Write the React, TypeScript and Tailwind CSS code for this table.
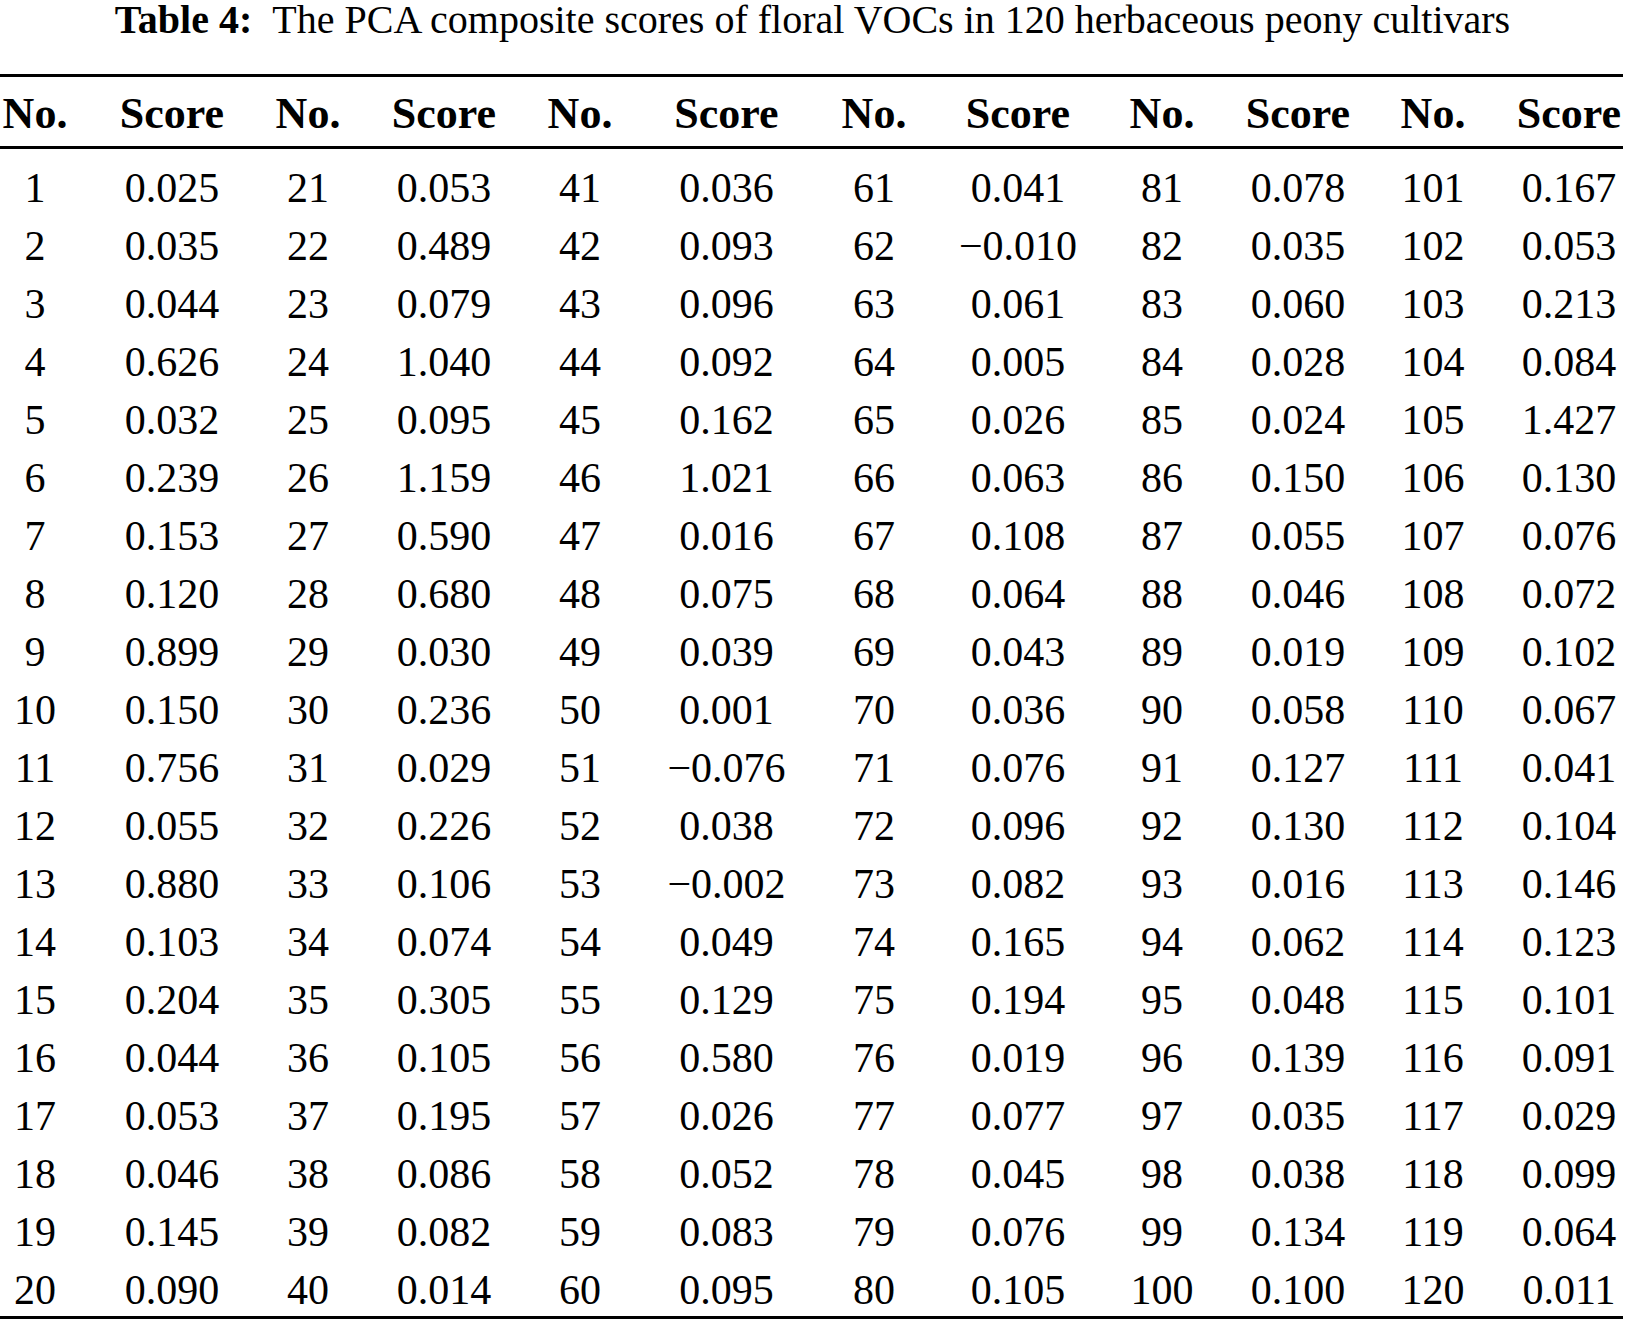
const scores: string[] = [
  '0.025', '0.035', '0.044', '0.626', '0.032', '0.239', '0.153', '0.120', '0.899', '0.150',
  '0.756', '0.055', '0.880', '0.103', '0.204', '0.044', '0.053', '0.046', '0.145', '0.090',
  '0.053', '0.489', '0.079', '1.040', '0.095', '1.159', '0.590', '0.680', '0.030', '0.236',
  '0.029', '0.226', '0.106', '0.074', '0.305', '0.105', '0.195', '0.086', '0.082', '0.014',
  '0.036', '0.093', '0.096', '0.092', '0.162', '1.021', '0.016', '0.075', '0.039', '0.001',
  '−0.076', '0.038', '−0.002', '0.049', '0.129', '0.580', '0.026', '0.052', '0.083', '0.095',
  '0.041', '−0.010', '0.061', '0.005', '0.026', '0.063', '0.108', '0.064', '0.043', '0.036',
  '0.076', '0.096', '0.082', '0.165', '0.194', '0.019', '0.077', '0.045', '0.076', '0.105',
  '0.078', '0.035', '0.060', '0.028', '0.024', '0.150', '0.055', '0.046', '0.019', '0.058',
  '0.127', '0.130', '0.016', '0.062', '0.048', '0.139', '0.035', '0.038', '0.134', '0.100',
  '0.167', '0.053', '0.213', '0.084', '1.427', '0.130', '0.076', '0.072', '0.102', '0.067',
  '0.041', '0.104', '0.146', '0.123', '0.101', '0.091', '0.029', '0.099', '0.064', '0.011',
];

const gridCols =
  'grid grid-cols-[70px_204px_68px_204px_68px_225px_70px_218px_70px_202px_68px_156px]';

const App = () => {
  const rows = Array.from({ length: 20 }, (_, r) => r);
  const groups = Array.from({ length: 6 }, (_, g) => g);

  return (
    <div className="min-h-screen bg-white text-black font-['Liberation_Serif','Times_New_Roman',serif]">
      {/* Caption */}
      <div className="text-center text-[40px] leading-[40px]">
        <span className="font-bold">Table 4:</span>
        <span className="ml-[20px]">The PCA composite scores of floral VOCs in 120 herbaceous peony cultivars</span>
      </div>

      {/* Table */}
      <div className="mt-[34px] w-[1623px] border-t-[3px] border-b-[3px] border-black">
        <div className={`${gridCols} border-b-[3px] border-black pt-[13px] pb-[8px] text-[44px] leading-[48px] font-bold`}>
          {groups.map((g) => (
            <div key={g} className="contents">
              <div className="text-center">No.</div>
              <div className={`text-center ${g === 5 ? 'pl-[48px]' : ''}`}>Score</div>
            </div>
          ))}
        </div>

        <div className="pt-[7px] text-[42px] leading-[52px]">
          {rows.map((r) => (
            <div key={r} className={`${gridCols} pt-[6px]`}>
              {groups.map((g) => {
                const n = g * 20 + r + 1;
                return (
                  <div key={g} className="contents">
                    <div className="text-center">{n}</div>
                    <div className={`text-center ${g === 5 ? 'pl-[48px]' : ''}`}>{scores[n - 1]}</div>
                  </div>
                );
              })}
            </div>
          ))}
        </div>
      </div>
    </div>
  );
};

export default App;
